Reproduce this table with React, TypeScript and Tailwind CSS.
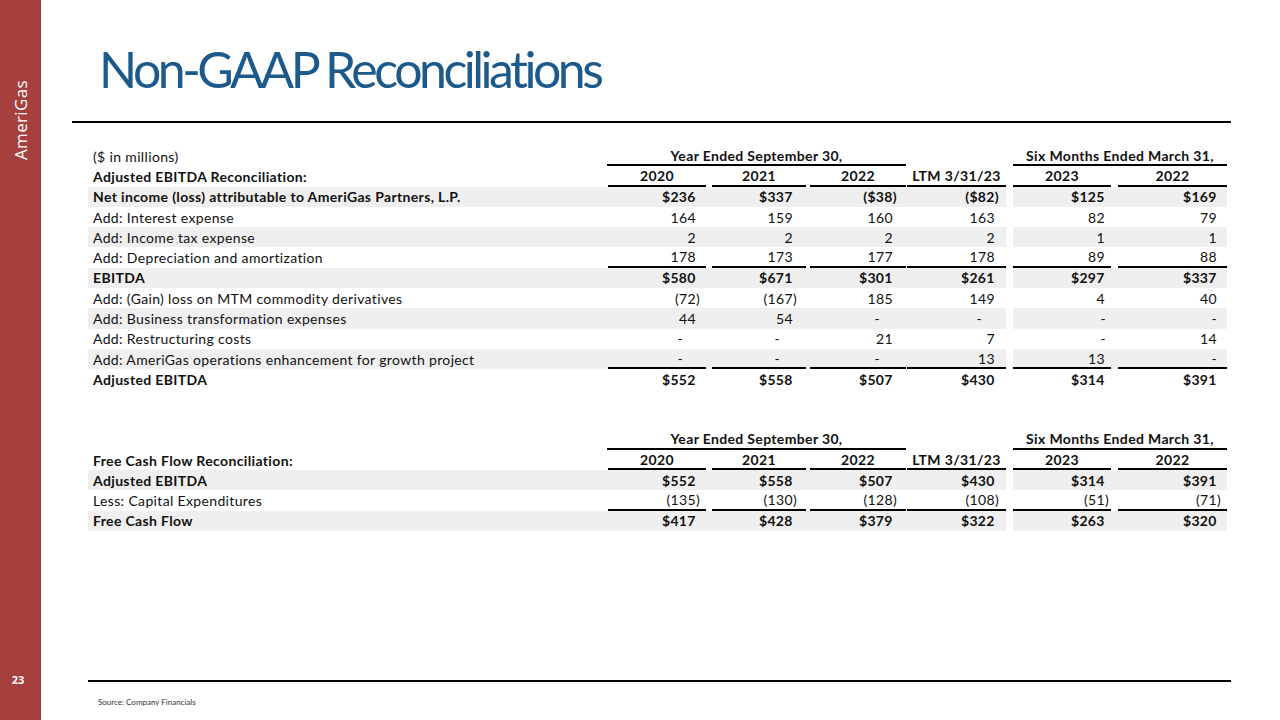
import React from 'react';

type Col = { w: string; ml: string; pr: string; dashPr: string };

// column boxes for the six value columns (spacer sits between index 3 and 4)
const cols: Col[] = [
  { w: 'w-[100px]', ml: 'ml-[2px]', pr: 'pr-[6px]', dashPr: 'pr-[23px]' },
  { w: 'w-[100px]', ml: 'ml-[6px]', pr: 'pr-[9px]', dashPr: 'pr-[26px]' },
  { w: 'w-[100px]', ml: 'ml-[4px]', pr: 'pr-[9px]', dashPr: 'pr-[26px]' },
  { w: 'w-[100px]', ml: 'ml-[1px]', pr: 'pr-[7px]', dashPr: 'pr-[24px]' },
  { w: 'w-[98px]', ml: 'ml-0', pr: 'pr-[2px]', dashPr: 'pr-[5px]' },
  { w: 'w-[116px]', ml: 'ml-[7px]', pr: 'pr-[6px]', dashPr: 'pr-[10px]' },
];

type Row = { label: string; bold?: boolean; gray?: boolean; line?: boolean; values: string[] };

const ebitdaRows: Row[] = [
  { label: 'Net income (loss) attributable to AmeriGas Partners, L.P.', bold: true, gray: true, values: ['$236', '$337', '($38)', '($82)', '$125', '$169'] },
  { label: 'Add: Interest expense', values: ['164', '159', '160', '163', '82', '79'] },
  { label: 'Add: Income tax expense', gray: true, values: ['2', '2', '2', '2', '1', '1'] },
  { label: 'Add: Depreciation and amortization', line: true, values: ['178', '173', '177', '178', '89', '88'] },
  { label: 'EBITDA', bold: true, gray: true, values: ['$580', '$671', '$301', '$261', '$297', '$337'] },
  { label: 'Add: (Gain) loss on MTM commodity derivatives', values: ['(72)', '(167)', '185', '149', '4', '40'] },
  { label: 'Add: Business transformation expenses', gray: true, values: ['44', '54', '-', '-', '-', '-'] },
  { label: 'Add: Restructuring costs', values: ['-', '-', '21', '7', '-', '14'] },
  { label: 'Add: AmeriGas operations enhancement for growth project', gray: true, line: true, values: ['-', '-', '-', '13', '13', '-'] },
  { label: 'Adjusted EBITDA', bold: true, values: ['$552', '$558', '$507', '$430', '$314', '$391'] },
];

const fcfRows: Row[] = [
  { label: 'Adjusted EBITDA', bold: true, gray: true, values: ['$552', '$558', '$507', '$430', '$314', '$391'] },
  { label: 'Less: Capital Expenditures', line: true, values: ['(135)', '(130)', '(128)', '(108)', '(51)', '(71)'] },
  { label: 'Free Cash Flow', bold: true, gray: true, values: ['$417', '$428', '$379', '$322', '$263', '$320'] },
];

const years = ['2020', '2021', '2022', 'LTM 3/31/23', '2023', '2022'];

const Cell: React.FC<{ col: Col; gray?: boolean; line?: boolean; children?: React.ReactNode; align?: 'right' | 'center'; pr?: string }> = ({ col, gray, line, children, align = 'right', pr }) => (
  <div className={`${col.w} h-full ${gray ? 'bg-[#efefef]' : ''}`}>
    <div
      className={`h-full ${col.ml} flex items-center ${align === 'right' ? 'justify-end' : 'justify-center'} ${pr ?? ''} ${line ? 'border-b-2 border-black' : ''}`}
    >
      {children}
    </div>
  </div>
);

const Value: React.FC<{ v: string }> = ({ v }) => {
  const neg = v.endsWith(')');
  return (
    <span className="whitespace-pre">
      {v}
      {!neg && v !== '-' && <span className="invisible">)</span>}
    </span>
  );
};

const DataRow: React.FC<{ row: Row }> = ({ row }) => (
  <div className={`flex h-[20.3px] ${row.bold ? 'font-bold' : ''}`}>
    <div className={`w-[518px] pl-[5px] flex items-center whitespace-nowrap ${row.gray ? 'bg-[#efefef]' : ''}`}>{row.label}</div>
    {row.values.map((v, i) => (
      <React.Fragment key={i}>
        {i === 4 && <div className="w-[7px]" />}
        <Cell col={cols[i]} gray={row.gray} line={row.line} pr={v === '-' ? cols[i].dashPr : cols[i].pr}>
          <Value v={v} />
        </Cell>
      </React.Fragment>
    ))}
  </div>
);

const Header: React.FC<{ note?: string; title: string }> = ({ note, title }) => (
  <>
    <div className="flex h-[20.3px]">
      <div className="w-[518px] pl-[5px] flex items-center">{note}</div>
      <div className="w-[300px] h-full">
        <div className="h-full ml-[1px] flex items-center justify-center font-bold border-b-2 border-black">Year Ended September 30,</div>
      </div>
      <div className="w-[100px]" />
      <div className="w-[7px]" />
      <div className="w-[214px] h-full">
        <div className="h-full flex items-center justify-center font-bold border-b-2 border-black">Six Months Ended March 31,</div>
      </div>
    </div>
    <div className="flex h-[20.3px] font-bold">
      <div className="w-[518px] pl-[5px] flex items-center">{title}</div>
      {years.map((y, i) => (
        <React.Fragment key={i}>
          {i === 4 && <div className="w-[7px]" />}
          <Cell col={cols[i]} line align="center">
            {y}
          </Cell>
        </React.Fragment>
      ))}
    </div>
  </>
);

const App: React.FC = () => {
  return (
    <div className="w-[1280px] h-[720px] flex bg-white overflow-hidden font-['Lato',sans-serif] text-[#111]">
      {/* side band */}
      <aside className="w-[41px] h-full bg-[#a5403f] flex flex-col items-center text-white shrink-0">
        <div className="mt-[78px] h-[84px] flex items-center justify-center [writing-mode:vertical-rl] rotate-180 text-[17px] font-['Open_Sans',sans-serif] tracking-[0.02em]">
          AmeriGas
        </div>
        <div className="mt-auto mb-[32px] text-[11px] font-bold font-['Open_Sans',sans-serif] -ml-[5px]">23</div>
      </aside>

      <main className="flex-1 h-full flex flex-col">
        <h1 className="mt-[43px] ml-[58px] h-[52px] leading-[52px] text-[50px] text-[#1d5a8c] tracking-[-0.07em]">
          Non-GAAP Reconciliations
        </h1>
        <div className="mt-[26px] ml-[31px] w-[1159px] h-[2px] bg-black" />

        <section className="mt-[23px] ml-[47px] text-[14px] tracking-[0.025em]">
          <Header note="($ in millions)" title="Adjusted EBITDA Reconciliation:" />
          {ebitdaRows.map((r, i) => (
            <DataRow key={i} row={r} />
          ))}
        </section>

        <section className="mt-[40px] ml-[47px] text-[14px] tracking-[0.025em]">
          <Header title="Free Cash Flow Reconciliation:" />
          {fcfRows.map((r, i) => (
            <DataRow key={i} row={r} />
          ))}
        </section>

        <div className="mt-auto ml-[47px] w-[1143px] h-[2px] bg-black" />
        <p className="mt-[15px] ml-[57px] leading-[10px] text-[8px] text-[#333] mb-[13px]">Source: Company Financials</p>
      </main>
    </div>
  );
};

export default App;
